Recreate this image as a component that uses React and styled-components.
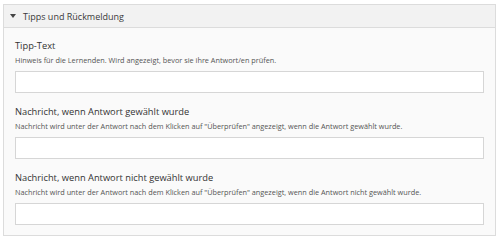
import React from "react";
import styled, { createGlobalStyle } from "styled-components";

const Global = createGlobalStyle`
  html, body { margin: 0; padding: 0; background: #ffffff; }
  body { font-family: "Open Sans", "Noto Sans", sans-serif; }
  * { box-sizing: border-box; }
`;

const Page = styled.div`
  padding: 4px 4px 0 3px;
  width: 500px;
`;

const Panel = styled.div`
  border: 1px solid #dcdcdc;
  background: #fafafa;
`;

const Header = styled.div`
  height: 23px;
  display: flex;
  align-items: center;
  gap: 7px;
  padding-left: 6px;
  background: #f2f2f2;
  border-bottom: 1px solid #dcdcdc;
  font-size: 9px;
  color: #3a3a3a;
`;

const Caret = styled.span`
  width: 0;
  height: 0;
  border-left: 3px solid transparent;
  border-right: 3px solid transparent;
  border-top: 4px solid #444;
`;

const Body = styled.div`
  padding: 11px 11px 10px 11px;
  display: flex;
  flex-direction: column;
  gap: 12px;
`;

const Field = styled.div`
  display: flex;
  flex-direction: column;
`;

const Label = styled.div`
  font-size: 9.3px;
  line-height: 14px;
  font-weight: 500;
  color: #333;
`;

const Desc = styled.div`
  margin-top: 1px;
  font-size: 7.3px;
  line-height: 12px;
  color: #555;
`;

const Input = styled.div`
  margin-top: 5px;
  height: 22px;
  background: #ffffff;
  border: 1px solid #d6d6d6;
`;

const fields = [
  {
    label: "Tipp-Text",
    desc: "Hinweis für die Lernenden. Wird angezeigt, bevor sie ihre Antwort/en prüfen.",
  },
  {
    label: "Nachricht, wenn Antwort gewählt wurde",
    desc: "Nachricht wird unter der Antwort nach dem Klicken auf \"Überprüfen\" angezeigt, wenn die Antwort gewählt wurde.",
  },
  {
    label: "Nachricht, wenn Antwort nicht gewählt wurde",
    desc: "Nachricht wird unter der Antwort nach dem Klicken auf \"Überprüfen\" angezeigt, wenn die Antwort nicht gewählt wurde.",
  },
];

export default function App() {
  return (
    <Page>
      <Global />
      <Panel>
        <Header>
          <Caret />
          Tipps und Rückmeldung
        </Header>
        <Body>
          {fields.map((f) => (
            <Field key={f.label}>
              <Label>{f.label}</Label>
              <Desc>{f.desc}</Desc>
              <Input />
            </Field>
          ))}
        </Body>
      </Panel>
    </Page>
  );
}
